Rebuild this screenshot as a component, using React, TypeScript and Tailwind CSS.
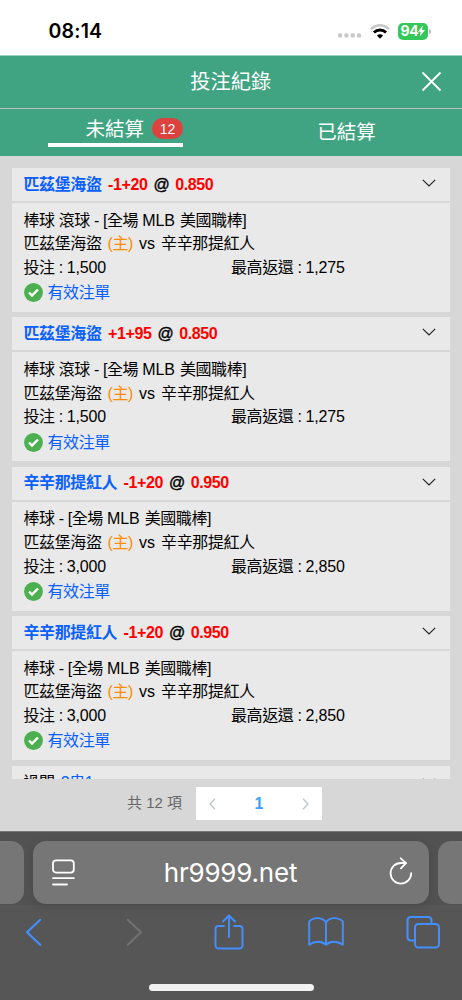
type Bet = {
  team: string
  line: string
  odds: string
  sport: string
  stake: string
  payout: string
}

const bets: Bet[] = [
  { team: '匹茲堡海盜', line: '-1+20', odds: '0.850', sport: '棒球 滾球', stake: '1,500', payout: '1,275' },
  { team: '匹茲堡海盜', line: '+1+95', odds: '0.850', sport: '棒球 滾球', stake: '1,500', payout: '1,275' },
  { team: '辛辛那提紅人', line: '-1+20', odds: '0.950', sport: '棒球', stake: '3,000', payout: '2,850' },
  { team: '辛辛那提紅人', line: '-1+20', odds: '0.950', sport: '棒球', stake: '3,000', payout: '2,850' },
]

function Chevron() {
  return (
    <svg className="-mt-[3px] h-[8px] w-[14px] shrink-0" viewBox="0 0 14 8" fill="none" stroke="#222" strokeWidth="1.2">
      <path d="M.8 .9 7 6.9 13.2 .9" />
    </svg>
  )
}

function StatusBar() {
  return (
    <div className="flex h-[55px] shrink-0 items-center bg-white pt-[7px] pr-[31px] pl-[48.5px]">
      <span className="font-['Inter'] text-[19.5px] leading-6 font-semibold tracking-[0.2px] text-black">08:14</span>
      <svg className="mt-[9px] ml-auto h-[5px] w-[24px]" viewBox="0 0 24 5" fill="#c8c8c8">
        <rect x="0" y=".3" width="4.2" height="4.2" rx="1.5" />
        <rect x="6.3" y=".3" width="4.2" height="4.2" rx="1.5" />
        <rect x="12.6" y=".3" width="4.2" height="4.2" rx="1.5" />
        <rect x="18.9" y=".3" width="4.2" height="4.2" rx="1.5" />
      </svg>
      <svg className="ml-[8px] h-[15px] w-[20px]" viewBox="0 0 20 15" fill="none">
        <path d="M1 5.2C6-.1 14-.1 19 5.2" stroke="#c8c8c8" strokeWidth="2.5" />
        <path d="M3.9 8.5c3.4-3.400 8.800-3.400 12.200 0" stroke="#000" strokeWidth="2.900" />
        <path d="M6.900 11.500c1.700-1.600 4.500-1.600 6.200 0L10 14.800z" fill="#000" />
      </svg>
      <div className="ml-[8px] flex h-[17px] w-[30px] items-center justify-center rounded-[5px] bg-[#34c759] text-white">
        <span className="font-['Inter'] text-[14px] leading-none font-bold tracking-tight">94</span>
        <svg className="h-[12px] w-[7px]" viewBox="0 0 7 11" fill="currentColor">
          <path d="M4.800 0 0 6.200h2.700L1.800 11 7 4.600H4z" />
        </svg>
      </div>
      <div className="ml-px h-[5px] w-[2px] rounded-r-full bg-[#bdbdbd]" />
    </div>
  )
}

function BetCard({ bet }: { bet: Bet }) {
  return (
    <div className="h-[143.800px] shrink-0 bg-[#e9e9e9]">
      <div className="flex h-[35px] items-center justify-between border-b-2 border-[#d7d7d7] pr-[14px] pl-[11.500px]">
        <div className="text-[16px] font-bold tracking-[-0.400px] whitespace-pre text-[#ff0000]">
          <span className="text-[#0a60ff]">{bet.team}</span>
          <span className="ml-[6.500px]">{bet.line}</span>
          <span className="mx-[6px] font-normal text-black [-webkit-text-stroke:0.400px_black]">@</span>
          <span>{bet.odds}</span>
        </div>
        <Chevron />
      </div>
      <div className="pt-[5.500px] pl-[11.500px] text-[16px] leading-[23.700px] tracking-[-0.400px] whitespace-nowrap text-black">
        <div>
          {bet.sport} - [全場 <span className="tracking-[-0.100px]">MLB</span> <span className="ml-[1px]">美國職棒]</span>
        </div>
        <div>
          匹茲堡海盜 <span className="ml-[2px] text-[#ff8c00]">(主)</span> <span className="ml-[2px] tracking-normal">vs</span>{' '}
          <span className="ml-[2px]">辛辛那提紅人</span>
        </div>
        <div className="flex">
          <span className="w-[207.500px]">
            投注 : <span className="tracking-[-0.200px]">{bet.stake}</span>
          </span>
          <span>
            最高返還 : <span className="tracking-[-0.200px]">{bet.payout}</span>
          </span>
        </div>
        <div className="flex h-[26px] items-center text-[#0a60ff]">
          <svg className="mr-[5px] h-[19px] w-[19px]" viewBox="0 0 19 19">
            <circle cx="9.500" cy="9.500" r="9.400" fill="#4caf50" />
            <path d="m5 9.500 3 3 6-6" fill="none" stroke="#fff" strokeWidth="2.400" />
          </svg>
          <span className="pt-px">有效注單</span>
        </div>
      </div>
    </div>
  )
}

function Browser() {
  return (
    <div className="flex h-[169px] shrink-0 flex-col border-t border-[#777] bg-[#565656]">
      <div className="flex h-[73px] shrink-0 justify-between bg-[#525252] pt-[9px] pb-px">
        <div className="h-[63px] w-[24px] rounded-r-[13px] bg-[#767676]" />
        <div className="flex h-[63px] w-[396px] items-center justify-between rounded-[13px] bg-[#767676] pr-[16px] pl-[18px] text-white shadow-[0_2px_10px_rgba(0,0,0,0.12)]">
          <svg className="h-[28px] w-[24px]" viewBox="0 0 24 28" fill="none" stroke="currentColor" strokeWidth="1.800" strokeLinecap="round">
            <rect x="2" y="1.300" width="20.800" height="12.300" rx="3" />
            <path d="M2 19.200h20.800M2 25.500h14" />
          </svg>
          <span className="mt-[1px] mr-[3px] font-['Inter'] text-[26px] leading-8 tracking-[-0.200px]">hr9999.net</span>
          <svg className="-mt-[3px] h-[28px] w-[24px]" viewBox="0 0 24 28" fill="none" stroke="currentColor" strokeWidth="1.800" strokeLinecap="round" strokeLinejoin="round">
            <path d="M22.200 16.100A10.300 10.300 0 1 1 12 6h4.800" />
            <path d="M11.700 1.300 17 6.100l-5.100 5.200" />
          </svg>
        </div>
        <div className="h-[63px] w-[24px] rounded-l-[13px] bg-[#767676]" />
      </div>
      <div className="flex h-[54px] items-center pr-[22px] pl-[25px] text-[#438fff]">
        <svg className="h-[28px] w-[17px]" viewBox="0 0 17 28" fill="none" stroke="currentColor" strokeWidth="2.200" strokeLinecap="round" strokeLinejoin="round">
          <path d="M15.200 1.800 2 14.300l13.200 12.500" />
        </svg>
        <svg className="ml-[83.500px] h-[28px] w-[17px] text-[#717171]" viewBox="0 0 17 28" fill="none" stroke="currentColor" strokeWidth="2.200" strokeLinecap="round" strokeLinejoin="round">
          <path d="M1.800 1.800 15 14.300 1.800 26.800" />
        </svg>
        <svg className="-mt-[1px] ml-[71px] h-[36px] w-[30px]" viewBox="0 0 30 36" fill="none" stroke="currentColor" strokeWidth="1.900" strokeLinecap="round" strokeLinejoin="round">
          <path d="M10 12H4.500Q1.500 12 1.500 15v16q0 3.500 3.500 3.500h20q3.500 0 3.500-3.500V15q0-3-3-3H20M15 23V2M9 7.500 15 1.500l6 6" />
        </svg>
        <svg className="ml-[64px] h-[30px] w-[36px]" viewBox="0 0 36 30" fill="none" stroke="currentColor" strokeWidth="1.900" strokeLinecap="round" strokeLinejoin="round">
          <path d="M18 5.200C14-.3 5.500 0 1.200 4.400v23.300c5.500-4 12.200-4 16.800 0 4.600-4 11.300-4 16.800 0V4.400C30.500 0 22-.3 18 5.200v22.500" />
        </svg>
        <svg className="ml-auto h-[34px] w-[34px]" viewBox="0 0 34 34" fill="none" stroke="currentColor" strokeWidth="2">
          <path d="M8.800 25.500H5q-3.500 0-3.500-3.500V5.500Q1.500 2 5 2h17q3.500 0 3.500 3.500V9" />
          <rect x="9" y="9" width="24" height="23.500" rx="3.500" />
        </svg>
      </div>
      <div className="mt-[25px] ml-[149px] h-[7px] w-[165px] rounded-full bg-[#f1f1f1]" />
    </div>
  )
}

export default function App() {
  return (
    <div className="flex h-[1000px] w-[462px] flex-col overflow-hidden bg-[#d7d7d7] font-['Liberation_Sans','Noto_Sans_CJK_TC',sans-serif]">
      <StatusBar />

      {/* Header */}
      <div className="flex h-[54px] shrink-0 items-center border-t border-b border-t-[#9fd0bf] border-b-[#bdbdbd] bg-[#40a381] pr-[20.500px] pb-[2px] pl-[41px] text-white">
        <h1 className="flex-1 pt-[2px] text-center text-[20.200px] leading-6 font-normal">投注紀錄</h1>
        <svg className="h-[21px] w-[21px]" viewBox="0 0 21 21" fill="none" stroke="currentColor" strokeWidth="1.800">
          <path d="m1.500 1.500 18 18m0-18-18 18" />
        </svg>
      </div>

      {/* Tabs */}
      <div className="flex h-[47px] shrink-0 bg-[#40a381] text-[19.500px] leading-6 font-normal text-white">
        <div className="flex w-[231px] justify-end pr-[48px]">
          <div className="flex h-[38px] w-[135px] items-center justify-end border-b-4 border-white pt-[5px]">
            <span>未結算</span>
            <span className="ml-[8px] flex h-[21px] w-[31px] items-center justify-center rounded-full bg-[#dc423e] text-[14px] leading-none">12</span>
          </div>
        </div>
        <div className="flex flex-1 items-center justify-center pb-px">已結算</div>
      </div>

      {/* Bets */}
      <div className="flex h-[623px] shrink-0 flex-col gap-[5.600px] overflow-hidden px-[12px] pt-[12px]">
        {bets.map((bet, i) => (
          <BetCard key={i} bet={bet} />
        ))}
        <div className="flex h-[35px] shrink-0 items-center justify-between bg-[#e9e9e9] pr-[14px] pl-[11.500px] text-[16px] tracking-[-0.400px] text-black">
          <div>
            過關 <span className="ml-[2px] text-[#0a60ff]">2串1</span>
          </div>
          <Chevron />
        </div>
      </div>

      {/* Pagination */}
      <div className="flex h-[52px] shrink-0 pt-[8px] pl-[127px] text-[#666]">
        <span className="w-[69px] text-[15px] leading-[32px] whitespace-nowrap">共 12 項</span>
        <div className="flex h-[33px] w-[126px] items-center justify-between bg-white px-[13px]">
          <svg className="h-[12px] w-[7px]" viewBox="0 0 7 12" fill="none" stroke="#c0c4cc" strokeWidth="1.300">
            <path d="M6 .8 1 6l5 5.200" />
          </svg>
          <span className="text-[16px] font-bold text-[#409eff]">1</span>
          <svg className="h-[12px] w-[7px]" viewBox="0 0 7 12" fill="none" stroke="#c0c4cc" strokeWidth="1.300">
            <path d="m1 .8 5 5.200-5 5.200" />
          </svg>
        </div>
      </div>

      <Browser />
    </div>
  )
}
